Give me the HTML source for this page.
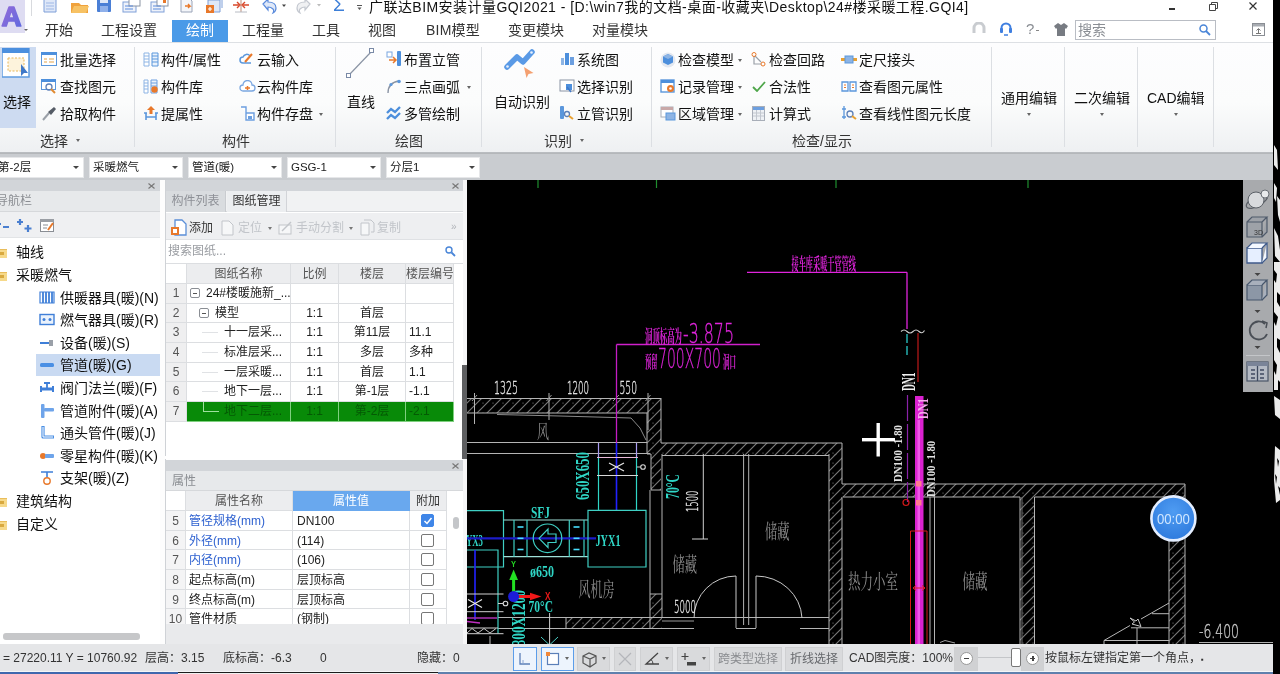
<!DOCTYPE html>
<html lang="zh-CN">
<head>
<meta charset="utf-8">
<title>广联达BIM安装计量GQI2021</title>
<style>
*{box-sizing:border-box;margin:0;padding:0}
html,body{width:1280px;height:674px;overflow:hidden;background:#fff}
body{position:relative;font-family:"Liberation Sans","Noto Sans CJK SC",sans-serif;font-size:14px;color:#222;filter:blur(.55px)}
.a{position:absolute;white-space:nowrap}
.t{position:absolute;white-space:nowrap;line-height:20px;height:20px}
#title{left:369px;top:-3px;font-size:14px;letter-spacing:.45px;color:#111;line-height:20px}
#tabs{left:0;top:17px;width:1273px;height:25px;background:#fff}
.tab{position:absolute;top:3px;height:22px;line-height:21px;font-size:14px;color:#333}
.tab.on{background:#4a9ae8;color:#fff;text-align:center;top:3px;height:23px}
#ribbon{left:0;top:42px;width:1273px;height:111px;background:linear-gradient(#fdfdfe 0,#fbfcfc 55%,#eef0f2 100%);border-top:1px solid #dde0e4;border-bottom:1px solid #b9bcc0}
.rb{position:absolute;font-size:14px;line-height:20px;color:#111}
.gl{position:absolute;top:88px;font-size:14px;line-height:20px;color:#333}
.vsep{position:absolute;top:4px;width:1px;height:100px;background:#dcdfe3}
#combo{left:0;top:153px;width:1273px;height:27px;background:#c9ccd0;border-top:1px solid #b4b7ba}
.cb{position:absolute;top:2.500px;height:21px;background:#fff;border:1px solid #e6e7e9;font-size:11.500px;line-height:18px;padding-left:3px;color:#222}
.cb i{position:absolute;right:4px;top:8px;border:3px solid transparent;border-top:3px solid #444;border-bottom:0}
.dn{position:absolute;width:0;height:0;border:2.500px solid transparent;border-top:3px solid #666;border-bottom:0;margin-left:.5px}

#left{left:0;top:180px;width:160px;height:464px;background:#fff;overflow:hidden}
#gap1{left:160px;top:180px;width:5px;height:464px;background:#fdfdfd}
.phead{position:absolute;left:0;top:0;width:100%;height:11px;background:#d2d5d9}
.ptitle{position:absolute;left:0;top:11px;width:100%;height:21px;background:#e7e9eb;border-bottom:1px solid #d6d8db;font-size:12px;line-height:20px;color:#8a8d92}
.nv{position:absolute;font-size:14px;line-height:22px;height:22px;color:#111;white-space:nowrap}
#mid{left:165px;top:180px;width:298px;height:276px;background:#fff;overflow:hidden;border-left:1px solid #cfd2d6}
#prop{left:165px;top:459px;width:298px;height:185px;background:#fff;overflow:hidden;border-left:1px solid #cfd2d6}
.tb12{position:absolute;font-size:12px;line-height:20px;height:20px;white-space:nowrap}
.cell{position:absolute;font-size:12px;line-height:19px;height:20px;white-space:nowrap;color:#222;border-right:1px solid #dcdee1;border-bottom:1px solid #dcdee1;overflow:hidden}
.hd{background:#ecedef;color:#555;text-align:center;line-height:20px}
.rn{background:#efeff0;color:#555;text-align:center}
.c{text-align:center}
#status{left:0;top:643.500px;width:1273px;height:27.500px;background:#e5e6e8;font-size:12px;color:#333}
#status .s{position:absolute;top:4.500px;line-height:20px;white-space:nowrap}
.sb{position:absolute;top:3px;height:24px;background:#d9dadc;border:1px solid #cfd0d2}
.sb.on{background:#edf4fd;border:1.500px solid #5b9dea}
.pm{position:absolute;top:4px;width:10px;height:10px;border:1px solid #8a8e94;border-radius:2px;background:#fff}
.pm:after{content:"";position:absolute;left:2px;top:3.500px;width:4px;height:1px;background:#555}
.tl{position:absolute;top:9px;height:1px;background:#e0e2e5}
.tl2{position:absolute;left:16px;top:0;width:16px;height:10px;border-left:1px solid #9fe09f;border-bottom:1px solid #9fe09f}
.ck{position:absolute;left:11px;top:3px;width:13px;height:13px;border:1px solid #777;border-radius:2px;background:#fff}
#cad{left:467px;top:179.500px;width:806px;height:464px;background:#000;overflow:hidden}
#vtb{left:1243px;top:180px;width:30px;height:212px;background:#a8aaad}
#prop .cell{line-height:21px}
</style>
</head>
<body>
<!-- logo + quick access -->
<div class="a" style="left:0;top:0;width:25px;height:33px;background:#dedcf2;z-index:5"></div>
<svg class="a" style="left:0;top:3px;z-index:6" width="24" height="27" viewBox="0 0 24 27"><defs><linearGradient id="lg" x1="0" y1="0" x2="1" y2="1"><stop offset="0" stop-color="#9a6ad8"/><stop offset="1" stop-color="#5a6ae0"/></linearGradient></defs><text x="11.500" y="23" text-anchor="middle" font-family="Liberation Sans" font-weight="bold" font-size="27" fill="url(#lg)" stroke="url(#lg)" stroke-width="1.600" stroke-linejoin="round" textLength="20" lengthAdjust="spacingAndGlyphs">A</text></svg>
<i class="dn" style="left:23px;top:29px;border-width:2px;border-top-color:#666;z-index:6"></i>
<div class="a" style="left:31px;top:0;width:1px;height:16px;background:#d8dade"></div>
<svg class="a" style="left:42px;top:-3px" width="320" height="18" viewBox="0 0 320 18">
 <path d="M2 0h9l3 3v12H2z" fill="#dfe8f8" stroke="#7f9fd8"/><path d="M4 6h8M4 9h8M4 12h8" stroke="#9db7e6"/>
 <path d="M29 6h8l2 2h7v8H29z" fill="#f0a23c"/><path d="M32 9h15l-3 7H29z" fill="#f7c264"/>
 <rect x="55" y="1" width="14" height="14" rx="1" fill="#4a7fd6"/><rect x="58" y="1" width="8" height="5" fill="#dfe8f8"/><rect x="58" y="9" width="8" height="6" fill="#8fb0ea"/>
 <rect x="81" y="5" width="13" height="10" fill="#eef2fa" stroke="#7f9fd8"/><rect x="87" y="1" width="11" height="8" fill="#fff" stroke="#8a94a4"/><path d="M83 9h8M83 12h8" stroke="#5b8bdc"/>
 <rect x="109" y="5" width="13" height="10" fill="#eef2fa" stroke="#7f9fd8"/><rect x="115" y="1" width="11" height="8" fill="#fff" stroke="#8a94a4"/><path d="M111 9h8M111 12h8" stroke="#5b8bdc"/><rect x="121" y="3" width="3" height="3" fill="#e8782a"/>
 <path d="M139 1h8l3 3v11h-11z" fill="#f4f6fa" stroke="#9aa4b8"/><path d="M143 9h5l-2-2m2 2l-2 2" stroke="#e8782a" stroke-width="1.400" fill="none"/>
 <path d="M166 3h12v12h-12z" fill="#dfe8f8" stroke="#7f9fd8"/><path d="M170 0h10v11" fill="none" stroke="#7f9fd8"/><rect x="164" y="8" width="8" height="8" fill="#e8782a"/><path d="M166 12h4M168 10v4" stroke="#fff" stroke-width="1.200"/>
 <path d="M199 1v14" stroke="#c8a090" stroke-width="1.200"/><path d="M191 8h6M207 8h-6" stroke="#d8482a" stroke-width="1.600"/><path d="M195 5l3 3-3 3M203 5l-3 3 3 3" fill="none" stroke="#d8482a" stroke-width="1.400"/><path d="M193 15h12" stroke="#b8bcc4"/>
 <path d="M221 7l5-5v3c5 0 8 2 8 6 0 2-1 4-3 5 1-2 1-3 0-4-1-1-3-2-5-2v3z" fill="#dfe8f8" stroke="#5b8bdc" stroke-width="1.200"/>
 <path d="M240 7.500l2 2.500 2-2.500z" fill="#444"/>
 <path d="M268 7l-5-5v3c-5 0-8 2-8 6 0 2 1 4 3 5-1-2-1-3 0-4 1-1 3-2 5-2v3z" fill="#f0f1f3" stroke="#c4c8d0" stroke-width="1.200"/>
 <path d="M275 7l2 2.500 2-2.500z" fill="#bbb"/>
 <path d="M315.500 10.500l2 2.500 2-2.500z" fill="#555"/>
</svg>
<span class="a" style="left:333px;top:-5px;font-size:19px;line-height:20px;color:#3d7fd8;font-family:'Liberation Sans',sans-serif">Σ</span>
<div class="a" style="left:357px;top:4.500px;width:5px;height:1px;background:#555"></div>
<!-- window controls -->
<div class="a" style="left:1169px;top:8px;width:6px;height:2px;background:#333"></div>
<svg class="a" style="left:1209px;top:1px" width="10" height="10" viewBox="0 0 10 10"><path d="M.5 3.500h6v6h-6z" fill="#fff" stroke="#444"/><path d="M2.500 3.500v-2h6v6h-2" fill="none" stroke="#444"/></svg>
<svg class="a" style="left:1249px;top:2px" width="8" height="8" viewBox="0 0 8 8"><path d="M.5.5l7 7M7.500.5l-7 7" stroke="#333" stroke-width="1.200"/></svg>
<!-- title bar -->
<div class="a" id="title">广联达BIM安装计量GQI2021 - [D:\win7我的文档-桌面-收藏夹\Desktop\24#楼采暖工程.GQI4]</div>
<div class="a" id="tabs">
 <span class="tab" style="left:45px">开始</span>
 <span class="tab" style="left:101px">工程设置</span>
 <span class="tab on" style="left:172px;width:56px">绘制</span>
 <span class="tab" style="left:242px">工程量</span>
 <span class="tab" style="left:312px">工具</span>
 <span class="tab" style="left:368px">视图</span>
 <span class="tab" style="left:426px;letter-spacing:.2px">BIM模型</span>
 <span class="tab" style="left:508px">变更模块</span>
 <span class="tab" style="left:592px">对量模块</span>

 <svg class="a" style="left:972px;top:5px" width="14" height="14" viewBox="0 0 14 14"><path d="M2 11V6a5 5 0 0 1 10 0v5" fill="none" stroke="#c9ccd0" stroke-width="3"/></svg>
 <svg class="a" style="left:999px;top:4px" width="14" height="16" viewBox="0 0 14 16"><path d="M2.500 9V7a4.500 4.500 0 0 1 9 0v2" fill="none" stroke="#3f7fe0" stroke-width="2"/><rect x="1" y="7" width="3" height="5" rx="1" fill="#3f7fe0"/><rect x="10" y="7" width="3" height="5" rx="1" fill="#3f7fe0"/><path d="M5 14h4" stroke="#3f7fe0" stroke-width="1.500"/></svg>
 <span class="a" style="left:1026px;top:1px;font-size:15px;line-height:22px;color:#8a8e94">?</span>
 <div class="a" style="left:1036px;top:13px;width:3px;height:1px;background:#888"></div>
 <svg class="a" style="left:1054px;top:6px" width="14" height="13" viewBox="0 0 14 13"><path d="M4 0l3 2 3-2 4 3-2 3-1-1v8H3V5L2 6 0 3z" fill="#777b82"/></svg>
 <div class="a" style="left:1075px;top:3px;width:141px;height:20px;border:1px solid #b9bdc4;background:#fff"></div>
 <span class="a" style="left:1078px;top:3px;font-size:14px;line-height:20px;color:#8a8e94">搜索</span>
 <svg class="a" style="left:1199px;top:7px" width="12" height="12" viewBox="0 0 12 12"><circle cx="4.500" cy="4.500" r="3.500" fill="none" stroke="#4a86d8" stroke-width="1.500"/><path d="M7 7l4 4" stroke="#4a86d8" stroke-width="1.800"/></svg>
 <svg class="a" style="left:1252px;top:6px" width="13" height="13" viewBox="0 0 13 13"><rect x=".5" y=".5" width="12" height="12" fill="#fff" stroke="#8a8e94"/><rect x="1" y="1" width="11" height="2.500" fill="#a8acb2"/><path d="M6.500 10V6M4.500 7.500l2-2 2 2M4 10.500h5" stroke="#777" fill="none"/></svg>
</div>
<div class="a" id="ribbon">
 <div class="a" style="left:0;top:4px;width:36px;height:81px;background:#cddbf1"></div>
 <svg class="a" style="left:2px;top:5px" width="28" height="30" viewBox="0 0 28 30"><rect x="0" y="0" width="27" height="29" fill="#fff" stroke="#5d9be0" stroke-width="1.5"/><rect x="0" y="0" width="27" height="5" fill="#4b8fde"/><rect x="6" y="10" width="16" height="13" fill="#fdf3dc" stroke="#e8b75a" stroke-dasharray="2 1.5" stroke-width="1"/><path d="M19 16l7 9-4 0-3 3z" fill="#3f78c8"/></svg>
 <span class="rb" style="left:3px;top:49px">选择</span>
 <!-- 选择 group -->
 <svg class="a" style="left:41px;top:9px" width="16" height="14" viewBox="0 0 16 14"><rect x=".5" y=".5" width="15" height="13" fill="#fff" stroke="#5b97dc"/><rect x="0" y="0" width="16" height="3" fill="#4d8fdc"/><path d="M3 7h3M8 7h5M3 10h3M8 10h5" stroke="#e4a44a" stroke-width="1.2"/></svg>
 <span class="rb" style="left:60px;top:7px">批量选择</span>
 <svg class="a" style="left:41px;top:36px" width="16" height="15" viewBox="0 0 16 15"><rect x=".5" y=".5" width="14" height="10" fill="#fff" stroke="#5b97dc"/><rect x="0" y="0" width="15" height="3" fill="#4d8fdc"/><circle cx="8" cy="8" r="3" fill="none" stroke="#5b7fb8" stroke-width="1.3"/><path d="M10 10l4 4" stroke="#e08a30" stroke-width="2"/></svg>
 <span class="rb" style="left:60px;top:34px">查找图元</span>
 <svg class="a" style="left:42px;top:63px" width="15" height="15" viewBox="0 0 15 15"><path d="M1 14l6-7" stroke="#9aa0a8" stroke-width="2"/><path d="M6 6l3 3 5-6-2-2z" fill="#555c66"/></svg>
 <span class="rb" style="left:60px;top:61px">拾取构件</span>
 <span class="gl" style="left:40px">选择</span><i class="dn" style="left:75px;top:96px"></i>
 <div class="vsep" style="left:134px"></div>
 <!-- 构件 group -->
 <svg class="a" style="left:143px;top:9px" width="16" height="15" viewBox="0 0 16 15"><path d="M1 1h5v13H1zM1 4h5M1 7h5M1 10h5" fill="#fff" stroke="#8db4e4" stroke-width="1"/><path d="M9 1h6v13H9zM9 4h6M9 7h6M9 10h6" fill="#eaf2fc" stroke="#5b97dc" stroke-width="1"/></svg>
 <span class="rb" style="left:161px;top:7px">构件/属性</span>
 <svg class="a" style="left:143px;top:36px" width="16" height="15" viewBox="0 0 16 15"><path d="M1 1h4v13H1zM1 4h4M1 7h4M1 10h4" fill="#fff" stroke="#8db4e4"/><path d="M8 1h6v13H8zM8 4h6M8 7h6" fill="#eaf2fc" stroke="#6c9fe0"/><circle cx="11.5" cy="10.5" r="3.2" fill="#e8782a"/></svg>
 <span class="rb" style="left:161px;top:34px">构件库</span>
 <svg class="a" style="left:143px;top:62px" width="16" height="16" viewBox="0 0 16 16"><path d="M8 1l4 4H9.500v4h-3V5H4z" fill="#e8782a"/><path d="M1 8h3M12 8h3M3 8v7M13 8v7M3 12h10" stroke="#5b97dc" stroke-width="1.6" fill="none"/></svg>
 <span class="rb" style="left:161px;top:61px">提属性</span>
 <svg class="a" style="left:239px;top:10px" width="16" height="13" viewBox="0 0 16 13"><path d="M12 10H4a3 3 0 0 1 0-6 4 4 0 0 1 7-1" fill="none" stroke="#5b97dc" stroke-width="1.5"/><path d="M6 9l7-8" stroke="#e8782a" stroke-width="2"/></svg>
 <span class="rb" style="left:257px;top:7px">云输入</span>
 <svg class="a" style="left:239px;top:37px" width="17" height="13" viewBox="0 0 17 13"><path d="M13 11H4a3 3 0 0 1 0-6 4.500 4.500 0 0 1 9 0 3 3 0 0 1 0 6z" fill="#fff" stroke="#7aa6e0" stroke-width="1.3"/><path d="M6 8h5M8.500 6v4" stroke="#e8782a" stroke-width="1.5"/></svg>
 <span class="rb" style="left:257px;top:34px">云构件库</span>
 <svg class="a" style="left:240px;top:63px" width="15" height="15" viewBox="0 0 15 15"><path d="M1 1h5v13h8V7H6" fill="#fff" stroke="#6c9fe0" stroke-width="1.4"/><rect x="8" y="10" width="4" height="3" fill="#6c9fe0"/></svg>
 <span class="rb" style="left:257px;top:61px">构件存盘</span><i class="dn" style="left:318px;top:70px"></i>
 <span class="gl" style="left:222px">构件</span>
 <div class="vsep" style="left:335px"></div>
 <!-- 绘图 group -->
 <svg class="a" style="left:345px;top:4px" width="30" height="32" viewBox="0 0 30 32"><path d="M4 28L26 5" stroke="#8a94a4" stroke-width="1.2"/><rect x="1.500" y="26.500" width="4" height="4" fill="#fff" stroke="#7a8aa6"/><rect x="24.500" y="1.500" width="4" height="4" fill="#fff" stroke="#7a8aa6"/></svg>
 <span class="rb" style="left:347px;top:49px">直线</span>
 <svg class="a" style="left:386px;top:8px" width="16" height="16" viewBox="0 0 16 16"><rect x="1" y="1" width="5" height="5" fill="#fff" stroke="#7aa6e0"/><rect x="11" y="0" width="4" height="15" rx="1" fill="#4d8fdc"/><path d="M3 9h6M7 6l3 3-3 3" stroke="#e8782a" stroke-width="1.5" fill="none"/></svg>
 <span class="rb" style="left:404px;top:7px">布置立管</span>
 <svg class="a" style="left:386px;top:36px" width="16" height="15" viewBox="0 0 16 15"><path d="M2 14C2 6 6 3 13 2" fill="none" stroke="#8a94a4" stroke-width="1.4"/><circle cx="13" cy="2.500" r="1.800" fill="#5b97dc"/><circle cx="5" cy="5.500" r="1.600" fill="#5b97dc"/></svg>
 <span class="rb" style="left:404px;top:34px">三点画弧</span><i class="dn" style="left:466px;top:43px"></i>
 <svg class="a" style="left:386px;top:63px" width="16" height="15" viewBox="0 0 16 15"><path d="M1 7l4-4 4 3 5-5M1 13l4-4 4 3 5-5" fill="none" stroke="#4d8fdc" stroke-width="2.400"/></svg>
 <span class="rb" style="left:404px;top:61px">多管绘制</span>
 <span class="gl" style="left:395px">绘图</span>
 <div class="vsep" style="left:481px"></div>
 <!-- 识别 group -->
 <svg class="a" style="left:504px;top:5px" width="32" height="32" viewBox="0 0 32 32"><path d="M3 19l10-10 6 5 9-10" fill="none" stroke="#5a9ae6" stroke-width="5.500" stroke-linecap="round" stroke-linejoin="round"/><circle cx="3.500" cy="18.500" r="1.300" fill="#e8f0fc"/><circle cx="27.500" cy="4.500" r="1.300" fill="#e8f0fc"/><path d="M20 19l2.500 11 2-4 5-1z" fill="#f4a070"/></svg>
 <span class="rb" style="left:494px;top:49px">自动识别</span>
 <svg class="a" style="left:560px;top:9px" width="15" height="14" viewBox="0 0 15 14"><rect x="1" y="6" width="3" height="7" fill="#8db4e4"/><rect x="5" y="1" width="4" height="12" fill="#4d8fdc"/><rect x="10" y="5" width="4" height="8" fill="#6c9fe0"/></svg>
 <span class="rb" style="left:577px;top:7px">系统图</span>
 <svg class="a" style="left:559px;top:36px" width="16" height="15" viewBox="0 0 16 15"><rect x="1" y="1" width="14" height="11" fill="#fff" stroke="#8a94a4"/><path d="M7 5h6v6H7z" fill="#4d8fdc"/><path d="M8 8l4 5" stroke="#3f78c8" stroke-width="1.5"/></svg>
 <span class="rb" style="left:577px;top:34px">选择识别</span>
 <svg class="a" style="left:559px;top:62px" width="16" height="16" viewBox="0 0 16 16"><rect x="1" y="1" width="4" height="13" rx="1" fill="#5b97dc"/><circle cx="8" cy="9" r="2.500" fill="none" stroke="#5b7fb8" stroke-width="1.3"/><path d="M10 11l4 3" stroke="#e8a030" stroke-width="2"/></svg>
 <span class="rb" style="left:577px;top:61px">立管识别</span>
 <span class="gl" style="left:544px">识别</span><i class="dn" style="left:579px;top:96px"></i>
 <div class="vsep" style="left:651px"></div>
 <!-- 检查/显示 group -->
 <svg class="a" style="left:660px;top:9px" width="16" height="16" viewBox="0 0 16 16"><circle cx="8" cy="8" r="7.500" fill="#e3e8f0"/><path d="M8 2l5 2.500v6L8 13l-5-2.500v-6z" fill="#4d8fdc"/><path d="M8 2l5 2.500L8 7 3 4.500z" fill="#8db4e4"/></svg>
 <span class="rb" style="left:678px;top:7px">检查模型</span><i class="dn" style="left:737px;top:16px"></i>
 <svg class="a" style="left:660px;top:36px" width="16" height="15" viewBox="0 0 16 15"><rect x="1" y="1" width="13" height="12" fill="#fff" stroke="#5b97dc" stroke-width="1.4"/><rect x="1" y="1" width="13" height="3" fill="#4d8fdc"/><circle cx="10.500" cy="9.500" r="3.500" fill="#e8782a"/><circle cx="10.500" cy="9.500" r="1.300" fill="#fff"/></svg>
 <span class="rb" style="left:678px;top:34px">记录管理</span><i class="dn" style="left:737px;top:43px"></i>
 <svg class="a" style="left:660px;top:63px" width="16" height="15" viewBox="0 0 16 15"><rect x="1" y="1" width="12" height="10" fill="#fff" stroke="#a8aeb8"/><rect x="1" y="1" width="12" height="3" fill="#c8a8a8"/><rect x="6" y="7" width="9" height="7" fill="#8db4e4" stroke="#5b97dc"/></svg>
 <span class="rb" style="left:678px;top:61px">区域管理</span><i class="dn" style="left:737px;top:70px"></i>
 <svg class="a" style="left:751px;top:9px" width="15" height="15" viewBox="0 0 15 15"><path d="M3 2v10h9M3 3l7 7" fill="none" stroke="#9aa0a8" stroke-width="1.2"/><circle cx="3" cy="2.500" r="2" fill="#fff" stroke="#e8782a"/><circle cx="12" cy="12" r="2" fill="#fff" stroke="#e8782a"/></svg>
 <span class="rb" style="left:769px;top:7px">检查回路</span>
 <svg class="a" style="left:752px;top:38px" width="14" height="11" viewBox="0 0 14 11"><path d="M1 6l4 4 8-9" fill="none" stroke="#4ea64a" stroke-width="1.800"/></svg>
 <span class="rb" style="left:769px;top:34px">合法性</span>
 <svg class="a" style="left:752px;top:63px" width="14" height="15" viewBox="0 0 14 15"><rect x=".5" y=".5" width="12" height="14" fill="#eef1f5" stroke="#a8aeb8"/><rect x="1" y="1" width="11" height="3" fill="#6c9fe0"/><path d="M1 7h11M1 10h11M4.500 4v10M8.500 4v10" stroke="#c2c7cf"/></svg>
 <span class="rb" style="left:769px;top:61px">计算式</span>
 <svg class="a" style="left:841px;top:12px" width="16" height="9" viewBox="0 0 16 9"><path d="M0 4.500h16" stroke="#e8a030" stroke-width="3"/><rect x="4" y="1" width="8" height="7" fill="#8db4e4" stroke="#5b97dc"/></svg>
 <span class="rb" style="left:859px;top:7px">定尺接头</span>
 <svg class="a" style="left:841px;top:38px" width="16" height="12" viewBox="0 0 16 12"><path d="M1 1h6v9H1zM9 1h6v9H9z" fill="#fff" stroke="#5b97dc" stroke-width="1.300"/><path d="M3 4h2M11 4h2M3 6.500h2M11 6.500h2" stroke="#e8782a"/></svg>
 <span class="rb" style="left:859px;top:34px">查看图元属性</span>
 <svg class="a" style="left:841px;top:62px" width="16" height="16" viewBox="0 0 16 16"><path d="M3 1v13M1 4h4M1 12h4" stroke="#5b97dc" stroke-width="1.300"/><circle cx="9" cy="9" r="3" fill="none" stroke="#5b7fb8" stroke-width="1.300"/><path d="M11 11l4 3" stroke="#e8a030" stroke-width="2"/></svg>
 <span class="rb" style="left:859px;top:61px">查看线性图元长度</span>
 <span class="gl" style="left:792px">检查/显示</span>
 <div class="vsep" style="left:991px"></div>
 <span class="rb" style="left:1001px;top:45px">通用编辑</span><i class="dn" style="left:1026px;top:70px"></i>
 <div class="vsep" style="left:1064px"></div>
 <span class="rb" style="left:1074px;top:45px">二次编辑</span><i class="dn" style="left:1099px;top:70px"></i>
 <div class="vsep" style="left:1137px"></div>
 <span class="rb" style="left:1147px;top:45px">CAD编辑</span><i class="dn" style="left:1173px;top:70px"></i>
 <div class="vsep" style="left:1213px"></div>
</div>
<div class="a" id="combo">
 <div class="cb" style="left:-6px;width:90px">第-2层<i></i></div>
 <div class="cb" style="left:89px;width:94px">采暖燃气<i></i></div>
 <div class="cb" style="left:188px;width:94px">管道(暖)<i></i></div>
 <div class="cb" style="left:287px;width:94px">GSG-1<i></i></div>
 <div class="cb" style="left:386px;width:94px">分层1<i></i></div>
</div>
<div class="a" id="left">
 <div class="phead"></div>
 <svg class="a" style="left:148px;top:3px" width="7" height="6" viewBox="0 0 7 6"><path d="M.5.5l6 5M6.500.5l-6 5" stroke="#777" stroke-width="1.100"/></svg>
 <div class="ptitle"><span style="position:absolute;left:-4px">导航栏</span></div>
 <div class="a" style="left:0;top:32px;width:160px;height:26px;background:#eff0f2;border-bottom:1px solid #e2e4e6"></div>
 <svg class="a" style="left:-2px;top:37px" width="60" height="18" viewBox="0 0 60 18"><path d="M0 7h3M5 10h6" stroke="#4a7fd0" stroke-width="2"/><path d="M22 2v6M19 5h6" stroke="#4a7fd0" stroke-width="2.200"/><path d="M30 8v7M26.500 11.500h7" stroke="#4a7fd0" stroke-width="2.200"/><rect x="42.500" y="2.500" width="13" height="12" fill="#fff" stroke="#8a8e94"/><rect x="42" y="2" width="14" height="3" fill="#9a9ea4"/><path d="M45 8h5M45 11h4" stroke="#8a8e94"/><path d="M50 13l5-7" stroke="#e8782a" stroke-width="2"/></svg>
 <svg class="a" style="left:-6px;top:66px" width="13" height="12" viewBox="0 0 13 12"><path d="M0 1h5l1 2h7v9H0z" fill="#e9bd5b"/><rect x="0" y="4" width="13" height="8" fill="#f6d98a"/><rect x="3" y="6" width="7" height="3" fill="#d9a93f"/></svg>
 <span class="nv" style="left:16px;top:61px">轴线</span>
 <svg class="a" style="left:-6px;top:89px" width="13" height="12" viewBox="0 0 13 12"><path d="M0 1h5l1 2h7v9H0z" fill="#e9bd5b"/><rect x="0" y="4" width="13" height="8" fill="#f6d98a"/><rect x="3" y="6" width="7" height="3" fill="#d9a93f"/></svg>
 <span class="nv" style="left:16px;top:84px">采暖燃气</span>
 <svg class="a" style="left:39px;top:110px" width="16" height="16" viewBox="0 0 16 16"><path d="M1 2h14v11H1z" fill="#fff" stroke="#3f7fd8" stroke-width="1.200"/><path d="M4 2v11M7 2v11M10 2v11M13 2v11" stroke="#3f7fd8" stroke-width="1.800"/></svg>
 <span class="nv" style="left:60px;top:107px">供暖器具(暖)(N)</span>
 <svg class="a" style="left:39px;top:132px" width="16" height="16" viewBox="0 0 16 16"><rect x="1" y="2.500" width="14" height="10" fill="#eaf2fc" stroke="#3f7fd8" stroke-width="1.400"/><circle cx="5" cy="7.500" r="1.500" fill="#3f7fd8"/><circle cx="11" cy="7.500" r="1.500" fill="#3f7fd8"/></svg>
 <span class="nv" style="left:60px;top:129px">燃气器具(暖)(R)</span>
 <svg class="a" style="left:39px;top:155px" width="16" height="16" viewBox="0 0 16 16"><path d="M1 8h9" stroke="#3f7fd8" stroke-width="2"/><rect x="10" y="5" width="4" height="6" fill="#9aa0a8"/></svg>
 <span class="nv" style="left:60px;top:152px">设备(暖)(S)</span>
 <div class="a" style="left:36px;top:174px;width:124px;height:22px;background:#c9daf2"></div>
 <svg class="a" style="left:39px;top:177px" width="16" height="16" viewBox="0 0 16 16"><rect x="1" y="6" width="14" height="4" rx="1.500" fill="#4a8fe4"/></svg>
 <span class="nv" style="left:60px;top:174px">管道(暖)(G)</span>
 <svg class="a" style="left:39px;top:200px" width="16" height="16" viewBox="0 0 16 16"><path d="M1 9h14" stroke="#3f7fd8" stroke-width="3"/><path d="M8 9V3M5 3h6" stroke="#3f7fd8" stroke-width="1.800"/><rect x="1" y="6" width="2" height="6" fill="#3f7fd8"/><rect x="13" y="6" width="2" height="6" fill="#3f7fd8"/></svg>
 <span class="nv" style="left:60px;top:197px">阀门法兰(暖)(F)</span>
 <svg class="a" style="left:39px;top:223px" width="16" height="16" viewBox="0 0 16 16"><rect x="2" y="1" width="3.500" height="14" rx="1" fill="#6ea4ea"/><rect x="5" y="5" width="10" height="3.500" rx="1" fill="#6ea4ea"/></svg>
 <span class="nv" style="left:60px;top:220px">管道附件(暖)(A)</span>
 <svg class="a" style="left:39px;top:245px" width="16" height="16" viewBox="0 0 16 16"><path d="M4 1v11h11" fill="none" stroke="#4a8fe4" stroke-width="3.200" stroke-linejoin="round"/><path d="M4 2v10h10" fill="none" stroke="#fff" stroke-width="1"/></svg>
 <span class="nv" style="left:60px;top:242px">通头管件(暖)(J)</span>
 <svg class="a" style="left:39px;top:268px" width="16" height="16" viewBox="0 0 16 16"><circle cx="4" cy="8" r="3" fill="#e8782a"/><rect x="6" y="6" width="9" height="4" rx="1" fill="#6ea4ea"/></svg>
 <span class="nv" style="left:60px;top:265px">零星构件(暖)(K)</span>
 <svg class="a" style="left:39px;top:290px" width="16" height="16" viewBox="0 0 16 16"><path d="M2 2h12M8 2v5" stroke="#3f7fd8" stroke-width="1.600"/><circle cx="8" cy="11" r="3.200" fill="none" stroke="#e8782a" stroke-width="1.400"/></svg>
 <span class="nv" style="left:60px;top:287px">支架(暖)(Z)</span>
 <svg class="a" style="left:-6px;top:315px" width="13" height="12" viewBox="0 0 13 12"><path d="M0 1h5l1 2h7v9H0z" fill="#e9bd5b"/><rect x="0" y="4" width="13" height="8" fill="#f6d98a"/><rect x="3" y="6" width="7" height="3" fill="#d9a93f"/></svg>
 <span class="nv" style="left:16px;top:310px">建筑结构</span>
 <svg class="a" style="left:-6px;top:338px" width="13" height="12" viewBox="0 0 13 12"><path d="M0 1h5l1 2h7v9H0z" fill="#e9bd5b"/><rect x="0" y="4" width="13" height="8" fill="#f6d98a"/><rect x="3" y="6" width="7" height="3" fill="#d9a93f"/></svg>
 <span class="nv" style="left:16px;top:333px">自定义</span>
 <div class="a" style="left:3px;top:453px;width:137px;height:7px;border-radius:3px;background:#c6c7c9"></div>
</div>
<div class="a" id="gap1"></div>
<div class="a" id="mid">
 <div class="phead"></div>
 <svg class="a" style="left:286px;top:3px" width="7" height="6" viewBox="0 0 7 6"><path d="M.5.5l6 5M6.500.5l-6 5" stroke="#777" stroke-width="1.100"/></svg>
 <div class="a" style="left:0;top:11px;width:298px;height:21px;background:#f1f2f3;border-bottom:1px solid #d9dbde"></div>
 <div class="a" style="left:0;top:11px;width:60px;height:21px;background:#d9dcdf;font-size:12px;line-height:20px;color:#8d9096;text-align:center;border-right:1px solid #c9ccd0">构件列表</div>
 <div class="a" style="left:61px;top:11px;width:60px;height:21px;background:#eceef0;font-size:12px;line-height:20px;color:#333;text-align:center;border-right:1px solid #d2d4d8">图纸管理</div>
 <div class="a" style="left:0;top:33px;width:298px;height:27px;background:#eeeff1;border-bottom:1px solid #dfe1e4"></div>
 <svg class="a" style="left:5px;top:38.500px" width="16" height="18" viewBox="0 0 16 18"><path d="M4 1h7l4 4v11H4z" fill="#fff" stroke="#5b8fd8" stroke-width="1.300"/><rect x="0" y="8" width="8" height="8" fill="#e8782a"/><rect x="2" y="10" width="4" height="4" fill="#fff"/></svg>
 <span class="tb12" style="left:23px;top:37.500px;color:#333">添加</span>
 <svg class="a" style="left:55px;top:39.500px" width="13" height="16" viewBox="0 0 13 16"><path d="M1 1h7l4 4v10H1z" fill="#f6f7f8" stroke="#c2c5ca"/></svg>
 <span class="tb12" style="left:72px;top:37.500px;color:#c2c5ca">定位</span><i class="dn" style="left:101px;top:46.500px;border-top-color:#777"></i>
 <svg class="a" style="left:112px;top:39.500px" width="16" height="16" viewBox="0 0 16 16"><rect x="1" y="5" width="12" height="9" fill="#f6f7f8" stroke="#c2c5ca"/><path d="M4 11l9-9" stroke="#c2c5ca" stroke-width="1.500"/></svg>
 <span class="tb12" style="left:130px;top:37.500px;color:#c2c5ca">手动分割</span><i class="dn" style="left:182px;top:46.500px;border-top-color:#777"></i>
 <svg class="a" style="left:194px;top:38.500px" width="15" height="17" viewBox="0 0 15 17"><path d="M1 4h8v12H1z" fill="#f6f7f8" stroke="#c2c5ca"/><path d="M4 1h7l3 3v9h-3" fill="none" stroke="#c2c5ca"/></svg>
 <span class="tb12" style="left:211px;top:37.500px;color:#c2c5ca">复制</span>
 <span class="tb12" style="left:285px;top:36.500px;color:#b0b3b8;font-size:10px">»</span>
 <span class="tb12" style="left:2px;top:60.500px;color:#9a9da2">搜索图纸...</span>
 <svg class="a" style="left:279px;top:65.500px" width="11" height="11" viewBox="0 0 11 11"><circle cx="4" cy="4" r="3" fill="none" stroke="#4a86d8" stroke-width="1.400"/><path d="M6.500 6.500l3.500 3.500" stroke="#4a86d8" stroke-width="1.800"/></svg>
 <div class="a" style="left:0;top:83px;width:298px;height:1px;background:#dcdee1"></div>
 <div class="cell" style="left:0px;top:84px;width:21px"></div>
 <div class="cell hd" style="left:21px;top:84px;width:104px">图纸名称</div>
 <div class="cell hd" style="left:125px;top:84px;width:48px">比例</div>
 <div class="cell hd" style="left:173px;top:84px;width:67px">楼层</div>
 <div class="cell hd" style="left:240px;top:84px;width:48px">楼层编号</div>
 <div class="cell rn" style="left:0px;top:104px;width:21px;height:20px">1</div>
 <div class="cell" style="left:21px;top:104px;width:104px;height:20px"><b class="pm" style="left:3px"></b><span style="position:absolute;left:19px">24#楼暖施新_...</span></div>
 <div class="cell c" style="left:125px;top:104px;width:48px;height:20px"></div>
 <div class="cell c" style="left:173px;top:104px;width:67px;height:20px"></div>
 <div class="cell" style="left:240px;top:104px;width:48px;height:20px;padding-left:3px"></div>
 <div class="cell rn" style="left:0px;top:124px;width:21px;height:19px">2</div>
 <div class="cell" style="left:21px;top:124px;width:104px;height:19px"><b class="pm" style="left:12px"></b><span style="position:absolute;left:28px">模型</span></div>
 <div class="cell c" style="left:125px;top:124px;width:48px;height:19px">1:1</div>
 <div class="cell c" style="left:173px;top:124px;width:67px;height:19px">首层</div>
 <div class="cell" style="left:240px;top:124px;width:48px;height:19px;padding-left:3px"></div>
 <div class="cell rn" style="left:0px;top:143px;width:21px;height:20px">3</div>
 <div class="cell" style="left:21px;top:143px;width:104px;height:20px"><i class="tl" style="left:15px;width:16px"></i><span style="position:absolute;left:37px">十一层采...</span></div>
 <div class="cell c" style="left:125px;top:143px;width:48px;height:20px">1:1</div>
 <div class="cell c" style="left:173px;top:143px;width:67px;height:20px">第11层</div>
 <div class="cell" style="left:240px;top:143px;width:48px;height:20px;padding-left:3px">11.1</div>
 <div class="cell rn" style="left:0px;top:163px;width:21px;height:20px">4</div>
 <div class="cell" style="left:21px;top:163px;width:104px;height:20px"><i class="tl" style="left:15px;width:16px"></i><span style="position:absolute;left:37px">标准层采...</span></div>
 <div class="cell c" style="left:125px;top:163px;width:48px;height:20px">1:1</div>
 <div class="cell c" style="left:173px;top:163px;width:67px;height:20px">多层</div>
 <div class="cell" style="left:240px;top:163px;width:48px;height:20px;padding-left:3px">多种</div>
 <div class="cell rn" style="left:0px;top:183px;width:21px;height:19px">5</div>
 <div class="cell" style="left:21px;top:183px;width:104px;height:19px"><i class="tl" style="left:15px;width:16px"></i><span style="position:absolute;left:37px">一层采暖...</span></div>
 <div class="cell c" style="left:125px;top:183px;width:48px;height:19px">1:1</div>
 <div class="cell c" style="left:173px;top:183px;width:67px;height:19px">首层</div>
 <div class="cell" style="left:240px;top:183px;width:48px;height:19px;padding-left:3px">1.1</div>
 <div class="cell rn" style="left:0px;top:202px;width:21px;height:20px">6</div>
 <div class="cell" style="left:21px;top:202px;width:104px;height:20px"><i class="tl" style="left:15px;width:16px"></i><span style="position:absolute;left:37px">地下一层...</span></div>
 <div class="cell c" style="left:125px;top:202px;width:48px;height:20px">1:1</div>
 <div class="cell c" style="left:173px;top:202px;width:67px;height:20px">第-1层</div>
 <div class="cell" style="left:240px;top:202px;width:48px;height:20px;padding-left:3px">-1.1</div>
 <div class="cell rn" style="left:0px;top:222px;width:21px;height:20px">7</div>
 <div class="cell" style="left:21px;top:222px;width:104px;height:20px;background:#088a08;color:#045a04;border-color:#7fd07f"><i class="tl2"></i><span style="position:absolute;left:37px">地下二层...</span></div>
 <div class="cell c" style="left:125px;top:222px;width:48px;height:20px;background:#088a08;color:#045a04;border-color:#7fd07f">1:1</div>
 <div class="cell c" style="left:173px;top:222px;width:67px;height:20px;background:#088a08;color:#045a04;border-color:#7fd07f">第-2层</div>
 <div class="cell" style="left:240px;top:222px;width:48px;height:20px;padding-left:3px;background:#088a08;color:#045a04;border-color:#7fd07f">-2.1</div>
</div>
<div class="a" id="prop">
 <div class="phead" style="top:1px"></div>
 <svg class="a" style="left:286px;top:4px" width="7" height="6" viewBox="0 0 7 6"><path d="M.5.5l6 5M6.500.5l-6 5" stroke="#777" stroke-width="1.100"/></svg>
 <div class="ptitle" style="top:12px;height:20px"><span style="position:absolute;left:6px">属性</span></div>
 <div class="cell" style="left:0px;top:32px;width:20px;height:20px"></div>
 <div class="cell hd" style="left:20px;top:32px;width:107px;height:20px">属性名称</div>
 <div class="cell hd" style="left:127px;top:32px;width:117px;height:20px;background:#69a8ee;color:#fff;border-color:#69a8ee">属性值</div>
 <div class="cell hd" style="left:244px;top:32px;width:37px;height:20px;color:#333">附加</div>
 <div class="cell rn" style="left:0;top:52px;width:20px;height:20px;background:#f4f4f5">5</div>
 <div class="cell" style="left:20px;top:52px;width:107px;height:20px;padding-left:3px;color:#2f62d0">管径规格(mm)</div>
 <div class="cell" style="left:127px;top:52px;width:117px;height:20px;padding-left:4px">DN100</div>
 <div class="cell" style="left:244px;top:52px;width:37px;height:20px"><b class="ck" style="background:#3f86e8;border-color:#3f86e8"><svg style="position:absolute;left:1px;top:1px" width="10" height="10" viewBox="0 0 10 10"><path d="M1.500 5l2.500 2.500 4.500-5.500" fill="none" stroke="#fff" stroke-width="1.500"/></svg></b></div>
 <div class="cell rn" style="left:0;top:72px;width:20px;height:19px;background:#f4f4f5">6</div>
 <div class="cell" style="left:20px;top:72px;width:107px;height:19px;padding-left:3px;color:#2f62d0">外径(mm)</div>
 <div class="cell" style="left:127px;top:72px;width:117px;height:19px;padding-left:4px">(114)</div>
 <div class="cell" style="left:244px;top:72px;width:37px;height:19px"><b class="ck"></b></div>
 <div class="cell rn" style="left:0;top:91px;width:20px;height:20px;background:#f4f4f5">7</div>
 <div class="cell" style="left:20px;top:91px;width:107px;height:20px;padding-left:3px;color:#2f62d0">内径(mm)</div>
 <div class="cell" style="left:127px;top:91px;width:117px;height:20px;padding-left:4px">(106)</div>
 <div class="cell" style="left:244px;top:91px;width:37px;height:20px"><b class="ck"></b></div>
 <div class="cell rn" style="left:0;top:111px;width:20px;height:20px;background:#f4f4f5">8</div>
 <div class="cell" style="left:20px;top:111px;width:107px;height:20px;padding-left:3px">起点标高(m)</div>
 <div class="cell" style="left:127px;top:111px;width:117px;height:20px;padding-left:4px">层顶标高</div>
 <div class="cell" style="left:244px;top:111px;width:37px;height:20px"><b class="ck"></b></div>
 <div class="cell rn" style="left:0;top:131px;width:20px;height:19px;background:#f4f4f5">9</div>
 <div class="cell" style="left:20px;top:131px;width:107px;height:19px;padding-left:3px">终点标高(m)</div>
 <div class="cell" style="left:127px;top:131px;width:117px;height:19px;padding-left:4px">层顶标高</div>
 <div class="cell" style="left:244px;top:131px;width:37px;height:19px"><b class="ck"></b></div>
 <div class="cell rn" style="left:0;top:150px;width:20px;height:20px;background:#f4f4f5">10</div>
 <div class="cell" style="left:20px;top:150px;width:107px;height:20px;padding-left:3px">管件材质</div>
 <div class="cell" style="left:127px;top:150px;width:117px;height:20px;padding-left:4px">(钢制)</div>
 <div class="cell" style="left:244px;top:150px;width:37px;height:20px"><b class="ck"></b></div>
 <div class="a" style="left:287px;top:58px;width:6px;height:12px;border-radius:3px;background:#c4c6c9"></div>
 <div class="a" style="left:0;top:165px;width:298px;height:20px;background:#e9eaec"></div>
</div>
<div class="a" style="left:463px;top:180px;width:4px;height:464px;background:#f6f6f7"></div>
<div class="a" style="left:462px;top:365px;width:5px;height:94px;background:#5e5f61"></div>
<div class="a" id="cad">
<svg class="a" style="left:0;top:.5px" width="806" height="464" viewBox="467 180 806 464" fill="none">
<defs><pattern id="h" width="10" height="10" patternUnits="userSpaceOnUse"><path d="M-1 11L11 -1M-1 1L1 -1M9 11L11 9" stroke="#787878" stroke-width="1.150"/><circle cx="3" cy="3" r=".6" fill="#888"/></pattern><radialGradient id="tg" cx=".5" cy=".35" r=".7"><stop offset="0" stop-color="#4f9cf2"/><stop offset="1" stop-color="#2c78dc"/></radialGradient></defs>
<path d="M538 180L538 188" stroke="#1f8f2f" stroke-width="1.2"/>
<path d="M656.5 180L656.5 188" stroke="#1f8f2f" stroke-width="1.2"/>
<path d="M836 180L836 188" stroke="#1f8f2f" stroke-width="1.2"/>
<path d="M1028 180L1028 188" stroke="#1f8f2f" stroke-width="1.2"/>
<rect x="467" y="398" width="194" height="15" fill="url(#h)"/>
<rect x="647" y="413" width="14" height="41" fill="url(#h)"/>
<rect x="651" y="454" width="10" height="36" fill="url(#h)"/>
<rect x="661" y="443" width="181" height="12.5" fill="url(#h)"/>
<rect x="829" y="454" width="13" height="191" fill="url(#h)"/>
<rect x="842" y="484" width="343" height="13" fill="url(#h)"/>
<rect x="1020" y="497" width="14.5" height="148" fill="url(#h)"/>
<rect x="1169" y="497" width="16" height="148" fill="url(#h)"/>
<rect x="566" y="617" width="96" height="11.5" fill="url(#h)"/>
<rect x="650" y="594" width="12" height="23" fill="url(#h)"/>
<path d="M467 398.5L661 398.5" stroke="#b4b4b4" stroke-width="1"/>
<path d="M467 413L647 413" stroke="#b4b4b4" stroke-width="1"/>
<path d="M661 398L661 443" stroke="#b4b4b4" stroke-width="1"/>
<path d="M647 413L647 454" stroke="#b4b4b4" stroke-width="1"/>
<path d="M647 454H651V490H661" stroke="#b4b4b4" stroke-width="1" fill="none"/>
<path d="M662 454L662 617" stroke="#b4b4b4" stroke-width="1"/>
<path d="M650 490L650 628" stroke="#b4b4b4" stroke-width="1"/>
<path d="M661 443L842 443" stroke="#b4b4b4" stroke-width="1"/>
<path d="M662 455.5L829 455.5" stroke="#b4b4b4" stroke-width="1"/>
<path d="M842 443L842 484" stroke="#b4b4b4" stroke-width="1"/>
<path d="M829 454L829 645" stroke="#b4b4b4" stroke-width="1"/>
<path d="M842 497L842 645" stroke="#b4b4b4" stroke-width="1"/>
<path d="M842 484L1185 484" stroke="#b4b4b4" stroke-width="1"/>
<path d="M843 497L1020 497" stroke="#b4b4b4" stroke-width="1"/>
<path d="M1034.5 497L1169 497" stroke="#b4b4b4" stroke-width="1"/>
<path d="M1020 497L1020 645" stroke="#b4b4b4" stroke-width="1"/>
<path d="M1022 497L1022 645" stroke="#707070" stroke-width="1"/>
<path d="M1034.5 497L1034.5 645" stroke="#b4b4b4" stroke-width="1"/>
<path d="M1169 497L1169 645" stroke="#b4b4b4" stroke-width="1"/>
<path d="M1185 484L1185 645" stroke="#b4b4b4" stroke-width="1"/>
<path d="M650 594L662 594" stroke="#b4b4b4" stroke-width="1"/>
<path d="M498 617.5L829 617.5" stroke="#b4b4b4" stroke-width="1"/>
<path d="M498 628.5L694 628.5" stroke="#b4b4b4" stroke-width="1"/>
<path d="M566 617L566 628" stroke="#b4b4b4" stroke-width="1"/>
<path d="M662 621L694 621" stroke="#9a9a9a" stroke-width="1"/>
<path d="M800 628.5L829 628.5" stroke="#b4b4b4" stroke-width="1"/>
<path d="M736 618L736 628" stroke="#b4b4b4" stroke-width="1"/>
<path d="M756 618L756 628" stroke="#b4b4b4" stroke-width="1"/>
<path d="M736 628.5L756 628.5" stroke="#b4b4b4" stroke-width="1"/>
<path d="M474.5 393L474.5 424" stroke="#b4b4b4" stroke-width="1"/>
<path d="M549 393L549 420" stroke="#b4b4b4" stroke-width="1"/>
<path d="M648 393L648 430" stroke="#b4b4b4" stroke-width="1"/>
<path d="M472 401L477 395" stroke="#9a9a9a" stroke-width="1"/>
<path d="M546.5 401L551.5 395" stroke="#9a9a9a" stroke-width="1"/>
<path d="M645.5 401L650.5 395" stroke="#9a9a9a" stroke-width="1"/>
<path d="M613 401L619 395" stroke="#9a9a9a" stroke-width="1"/>
<text x="494" y="393.5" font-size="17" font-family="DejaVu Sans" font-weight="200" fill="#e8e8e8" text-anchor="start" textLength="24" lengthAdjust="spacingAndGlyphs" stroke="#e8e8e8" stroke-width=".35">1325</text>
<text x="567" y="393.5" font-size="17" font-family="DejaVu Sans" font-weight="200" fill="#e8e8e8" text-anchor="start" textLength="22" lengthAdjust="spacingAndGlyphs" stroke="#e8e8e8" stroke-width=".35">1200</text>
<text x="619.5" y="393.5" font-size="17" font-family="DejaVu Sans" font-weight="200" fill="#e8e8e8" text-anchor="start" textLength="17.5" lengthAdjust="spacingAndGlyphs" stroke="#e8e8e8" stroke-width=".35">550</text>
<path d="M497 414.500L560 416L631 418L640 428L646 440" stroke="#8a8a8a" stroke-width="1" fill="none"/>
<path d="M467 442.5L647 442.5" stroke="#b4b4b4" stroke-width="1"/>
<path d="M467 453.5L650 453.5" stroke="#b4b4b4" stroke-width="1"/>
<text x="537" y="439" font-size="19" font-family="Noto Serif CJK SC" font-weight="normal" fill="#8c8c8c" text-anchor="start" textLength="12" lengthAdjust="spacingAndGlyphs">风</text>
<path d="M616.5 344.5L760 344.5" stroke="#d020cc" stroke-width="1.3"/>
<path d="M616.5 344.5L616.5 443" stroke="#c41cc4" stroke-width="1.3"/>
<text x="645" y="342.5" font-size="18" font-family="Noto Serif CJK SC" font-weight="bold" fill="#e024dc" text-anchor="start" textLength="37" lengthAdjust="spacingAndGlyphs">洞顶标高为</text>
<text x="683" y="343" font-size="26" font-family="DejaVu Sans" font-weight="200" fill="#e024dc" text-anchor="start" textLength="51" lengthAdjust="spacingAndGlyphs" stroke="#e024dc" stroke-width=".35">-3.875</text>
<text x="645" y="367.5" font-size="16.5" font-family="Noto Serif CJK SC" font-weight="bold" fill="#e024dc" text-anchor="start" textLength="12.5" lengthAdjust="spacingAndGlyphs">预留</text>
<text x="658" y="368" font-size="26" font-family="DejaVu Sans" font-weight="200" fill="#e024dc" text-anchor="start" textLength="63" lengthAdjust="spacingAndGlyphs" stroke="#e024dc" stroke-width=".35">700X700</text>
<text x="723" y="367.5" font-size="16.5" font-family="Noto Serif CJK SC" font-weight="bold" fill="#e024dc" text-anchor="start" textLength="13" lengthAdjust="spacingAndGlyphs">洞口</text>
<path d="M747 272.3L907 272.3" stroke="#e024dc" stroke-width="1.3"/>
<path d="M907 272.3L907 329" stroke="#e024dc" stroke-width="1.3"/>
<text x="791.5" y="269.5" font-size="16.5" font-family="Noto Serif CJK SC" font-weight="bold" fill="#e024dc" text-anchor="start" textLength="64.5" lengthAdjust="spacingAndGlyphs">接车库采暖干管管线</text>
<path d="M901 331.500q3 -3 6 0t6 0t6 0t5.500 -1" stroke="#d0d0d0" stroke-width="1.1" fill="none"/>
<path d="M907 334L907 358" stroke="#28c8c8" stroke-width="1.3" stroke-dasharray="9 3"/>
<path d="M918 333L918 382" stroke="#b01818" stroke-width="1.3"/>
<text x="915" y="391" font-size="18" font-family="Liberation Serif" font-weight="bold" fill="#f0f0f0" text-anchor="start" textLength="18.5" lengthAdjust="spacingAndGlyphs" transform="rotate(-90 915 391)">DN1</text>
<path d="M907.5 395L907.5 502" stroke="#8a22a8" stroke-width="1.2" stroke-dasharray="26 3"/>
<rect x="915" y="396" width="8.5" height="249" fill="#da22d0"/>
<rect x="917.5" y="420" width="2.5" height="225" fill="#ee58e6"/>
<text x="928" y="419" font-size="15" font-family="Liberation Serif" font-weight="bold" fill="#f4a8ee" text-anchor="start" textLength="21" lengthAdjust="spacingAndGlyphs" transform="rotate(-90 928 419)">DN1</text>
<text x="901.5" y="482" font-size="12" font-family="Liberation Serif" font-weight="bold" fill="#e0e0e0" text-anchor="start" textLength="57" lengthAdjust="spacingAndGlyphs" transform="rotate(-90 901.5 482)">DN100 -1.80</text>
<text x="935" y="497" font-size="12" font-family="Liberation Serif" font-weight="bold" fill="#e0e0e0" text-anchor="start" textLength="56" lengthAdjust="spacingAndGlyphs" transform="rotate(-90 935 497)">DN100 -1.80</text>
<circle cx="906" cy="502.500" r="3" fill="none" stroke="#d01818" stroke-width="1.200"/>
<rect x="916" y="481" width="5.5" height="5.5" fill="#ff7a90"/>
<rect x="916" y="500" width="5.5" height="5.5" fill="#ff7a90"/>
<path d="M910.500 531V645M927 531V645M910.500 531H927" stroke="#d81818" stroke-width="1" fill="none"/>
<path d="M913 588H925M916 585.500l-3 2.500 3 2.500M922 585.500l3 2.500-3 2.500" stroke="#e02020" stroke-width="1" fill="none"/>
<path d="M930 497L930 645" stroke="#b4b4b4" stroke-width="1"/>
<path d="M934.5 497L934.5 645" stroke="#b4b4b4" stroke-width="1"/>
<rect x="862" y="438" width="33" height="3.4" fill="#fff"/>
<rect x="876.5" y="423" width="3.4" height="33.5" fill="#fff"/>
<path d="M616.5 443L616.5 510" stroke="#2222ff" stroke-width="1.6"/>
<path d="M598.5 443L598.5 458" stroke="#a89cf0" stroke-width="1.2"/>
<path d="M636.5 443L636.5 458" stroke="#a89cf0" stroke-width="1.2"/>
<path d="M598.5 458L598.5 510" stroke="#2fd6c6" stroke-width="1.2"/>
<path d="M636.5 458L636.5 510" stroke="#2fd6c6" stroke-width="1.2"/>
<path d="M597 457.5L638 457.5" stroke="#e8b8d8" stroke-width="1.2"/>
<path d="M597 475.5L638 475.5" stroke="#d8d8d8" stroke-width="1.2"/>
<path d="M609 463L624 471M624 463L609 471" stroke="#e8e8e8" stroke-width="1.2" fill="none"/>
<path d="M637 467L640.5 467" stroke="#d0d0d0" stroke-width="1"/>
<circle cx="643" cy="467" r="2.300" fill="none" stroke="#d8d8d8" stroke-width="1.100"/>
<text x="589" y="500" font-size="18" font-family="Liberation Serif" font-weight="bold" fill="#2fd6c6" text-anchor="start" textLength="48" lengthAdjust="spacingAndGlyphs" transform="rotate(-90 589 500)">650X650</text>
<text x="679" y="499" font-size="18" font-family="Liberation Serif" font-weight="bold" fill="#2fd6c6" text-anchor="start" textLength="25" lengthAdjust="spacingAndGlyphs" transform="rotate(-90 679 499)">70°C</text>
<path d="M703.3 454L703.3 539" stroke="#d0d0d0" stroke-width="1"/>
<path d="M692 539L708 539" stroke="#d0d0d0" stroke-width="1"/>
<text x="698" y="512" font-size="15.5" font-family="DejaVu Sans" font-weight="200" fill="#e8e8e8" text-anchor="start" textLength="21.5" lengthAdjust="spacingAndGlyphs" transform="rotate(-90 698 512)" stroke="#e8e8e8" stroke-width=".35">1500</text>
<path d="M743.6 454L743.6 625" stroke="#b4b4b4" stroke-width="1"/>
<path d="M748.7 454L748.7 625" stroke="#b4b4b4" stroke-width="1"/>
<path d="M694 618A42 42 0 0 1 736 576V618" stroke="#c8c8c8" stroke-width="1" fill="none"/>
<path d="M756 618V576A46 44 0 0 1 802 618" stroke="#c8c8c8" stroke-width="1" fill="none"/>
<text x="672.5" y="572" font-size="20" font-family="Noto Serif CJK SC" font-weight="normal" fill="#8f8f8f" text-anchor="start" textLength="24.5" lengthAdjust="spacingAndGlyphs">储藏</text>
<text x="765" y="539" font-size="20" font-family="Noto Serif CJK SC" font-weight="normal" fill="#8f8f8f" text-anchor="start" textLength="24.5" lengthAdjust="spacingAndGlyphs">储藏</text>
<text x="962.5" y="588.5" font-size="20" font-family="Noto Serif CJK SC" font-weight="normal" fill="#8f8f8f" text-anchor="start" textLength="25" lengthAdjust="spacingAndGlyphs">储藏</text>
<text x="848" y="589" font-size="20" font-family="Noto Serif CJK SC" font-weight="normal" fill="#8f8f8f" text-anchor="start" textLength="50" lengthAdjust="spacingAndGlyphs">热力小室</text>
<text x="578.5" y="597" font-size="20" font-family="Noto Serif CJK SC" font-weight="normal" fill="#8f8f8f" text-anchor="start" textLength="36" lengthAdjust="spacingAndGlyphs">风机房</text>
<text x="674" y="613" font-size="17" font-family="DejaVu Sans" font-weight="200" fill="#e8e8e8" text-anchor="start" textLength="22" lengthAdjust="spacingAndGlyphs" stroke="#e8e8e8" stroke-width=".35">5000</text>
<path d="M467 510.700H503.500V567H467" stroke="#3fd0c4" stroke-width="1.2" fill="none"/>
<text x="466" y="546" font-size="17" font-family="Liberation Serif" font-weight="bold" fill="#2fd6c6" text-anchor="start" textLength="17" lengthAdjust="spacingAndGlyphs">YX3</text>
<path d="M467 550H498V633.500" stroke="#3fd0c4" stroke-width="1.2" fill="none"/>
<path d="M475 550L475 620" stroke="#2222ff" stroke-width="1.6"/>
<path d="M503.5 520L588 520" stroke="#9fe0d8" stroke-width="1.2"/>
<path d="M503.5 556.7L588 556.7" stroke="#9fe0d8" stroke-width="1.2"/>
<path d="M514 520L514 556.7" stroke="#3fd0c4" stroke-width="1.2"/>
<path d="M527 520L527 556.7" stroke="#3fd0c4" stroke-width="1.2"/>
<path d="M569.3 520L569.3 556.7" stroke="#3fd0c4" stroke-width="1.2"/>
<path d="M584 520L584 556.7" stroke="#3fd0c4" stroke-width="1.2"/>
<path d="M467 538.3L596 538.3" stroke="#1c1cc8" stroke-width="2.2"/>
<circle cx="547.500" cy="538.300" r="14.300" fill="none" stroke="#3fd0c4" stroke-width="1.200"/>
<path d="M539 538.300L548 529V534H556V542.500H548V547.500Z" stroke="#3fd0c4" stroke-width="1.2" fill="none"/>
<path d="M517.5 527L523.5 527" stroke="#48e0ff" stroke-width="1.6"/>
<path d="M517.5 538.3L523.5 538.3" stroke="#48e0ff" stroke-width="1.6"/>
<path d="M517.5 549.5L523.5 549.5" stroke="#48e0ff" stroke-width="1.6"/>
<path d="M573.5 527L579.5 527" stroke="#48e0ff" stroke-width="1.6"/>
<path d="M573.5 538.3L579.5 538.3" stroke="#48e0ff" stroke-width="1.6"/>
<path d="M573.5 549.5L579.5 549.5" stroke="#48e0ff" stroke-width="1.6"/>
<text x="531" y="517.5" font-size="16.5" font-family="Liberation Serif" font-weight="bold" fill="#2fd6c6" text-anchor="start" textLength="19" lengthAdjust="spacingAndGlyphs">SFJ</text>
<path d="M588 510.300H646V567H588Z" stroke="#3fd0c4" stroke-width="1.2" fill="none"/>
<text x="595.5" y="546.3" font-size="17" font-family="Liberation Serif" font-weight="bold" fill="#2fd6c6" text-anchor="start" textLength="25" lengthAdjust="spacingAndGlyphs">JYX1</text>
<text x="530" y="577" font-size="16.5" font-family="Liberation Serif" font-weight="bold" fill="#2fd6c6" text-anchor="start" textLength="24" lengthAdjust="spacingAndGlyphs">ø650</text>
<text x="528.5" y="612" font-size="17" font-family="Liberation Serif" font-weight="bold" fill="#2fd6c6" text-anchor="start" textLength="24.5" lengthAdjust="spacingAndGlyphs">70°C</text>
<text x="525" y="646.5" font-size="19" font-family="Liberation Serif" font-weight="bold" fill="#2fd6c6" text-anchor="start" textLength="56.5" lengthAdjust="spacingAndGlyphs" transform="rotate(-90 525 646.5)">800X1200</text>
<path d="M467 594L503.5 594" stroke="#d0d0d0" stroke-width="1"/>
<path d="M467 611.7L503.5 611.7" stroke="#d0d0d0" stroke-width="1"/>
<path d="M467 618L497 618" stroke="#a030a8" stroke-width="1.6"/>
<path d="M467 628L498 628" stroke="#d0d0d0" stroke-width="1"/>
<path d="M467 633.7L503.5 633.7" stroke="#d0d0d0" stroke-width="1"/>
<path d="M467 633L472 628.500L478 633L484 628.500L490 633L496 628.500" stroke="#c8c8c8" stroke-width="1" fill="none"/>
<path d="M468 599.500L482 607.500M482 599.500L468 607.500" stroke="#e8e8e8" stroke-width="1.2" fill="none"/>
<path d="M498 603.5L503 603.5" stroke="#d0d0d0" stroke-width="1"/>
<circle cx="505.500" cy="603.500" r="2.300" fill="none" stroke="#d8d8d8" stroke-width="1.100"/>
<path d="M467 621.500L480 623" stroke="#c030c0" stroke-width="1.3" fill="none"/>
<path d="M549.6 613L549.6 645" stroke="#d0d0d0" stroke-width="1"/>
<path d="M541 637l8.500 8M558 637l-8.500 8" stroke="#48c8c0" stroke-width="1" fill="none"/>
<path d="M490 636L490 645" stroke="#c0c0c0" stroke-width="1"/>
<path d="M513.6 596L513.6 578" stroke="#22e022" stroke-width="3"/>
<path d="M509.300 580L513.600 569.500L518 580Z" stroke="#22e022" stroke-width="0" fill="#22e022"/>
<text x="511" y="567" font-size="9" font-family="Liberation Sans" font-weight="bold" fill="#22d822" text-anchor="start" textLength="5" lengthAdjust="spacingAndGlyphs">Y</text>
<path d="M518 596.5L531 596.5" stroke="#f01818" stroke-width="3"/>
<path d="M530 592.800L541.500 596.500L530 600.200Z" stroke="#f01818" stroke-width="0" fill="#f01818"/>
<text x="545" y="600" font-size="10" font-family="Liberation Sans" font-weight="bold" fill="#e81818" text-anchor="start" textLength="5.5" lengthAdjust="spacingAndGlyphs">X</text>
<circle cx="513.600" cy="596.500" r="5.500" fill="#1c1cd8"/>
<path d="M1104 640.500L1130 625.500M1141 619L1169 603" stroke="#b8b8b8" stroke-width="1" fill="none"/>
<path d="M1152 613.700H1169M1131 627.800H1169M1104 640.500H1169M1137 628V645M1104 640.500V645" stroke="#b8b8b8" stroke-width="1" fill="none"/>
<path d="M1130 618L1134.500 622L1132 624L1141 626.500L1138 619L1136 621Z" stroke="#c8c8c8" stroke-width="1" fill="none"/>
<text x="1199" y="637.5" font-size="19" font-family="DejaVu Sans" font-weight="200" fill="#c8c8c8" text-anchor="start" textLength="40" lengthAdjust="spacingAndGlyphs" stroke="#c8c8c8" stroke-width=".35">-6.400</text>
<path d="M1199 642.5L1273 642.5" stroke="#b0b0b0" stroke-width="1"/>
<path d="M940 642.500l5 -2l10 2.500" stroke="#a0a0a0" stroke-width="1" fill="none"/>
<circle cx="1173.400" cy="518.400" r="22" fill="url(#tg)" stroke="#e4eeff" stroke-width="2.600"/>
<text x="1173.4" y="523.5" font-size="14" font-family="Liberation Sans" font-weight="normal" fill="#cfe6ff" text-anchor="middle" textLength="33" lengthAdjust="spacingAndGlyphs">00:00</text>
</svg>
</div>
<div class="a" id="status">
 <span class="s" style="left:3px">= 27220.11 Y = 10760.92</span>
 <span class="s" style="left:145px">层高：3.15</span>
 <span class="s" style="left:223px">底标高：-6.3</span>
 <span class="s" style="left:320px">0</span>
 <span class="s" style="left:417px">隐藏：0</span>
 <div class="sb on" style="left:513px;width:24px"><svg style="position:absolute;left:4px;top:4px" width="14" height="14" viewBox="0 0 14 14"><path d="M2 1v11h10" fill="none" stroke="#5b7fb8" stroke-width="1.300"/><path d="M5 8v4" stroke="#8aa4d0" stroke-width="1"/></svg></div>
 <div class="sb on" style="left:541px;width:33px"><svg style="position:absolute;left:3px;top:3px" width="16" height="16" viewBox="0 0 16 16"><rect x="2.500" y="2.500" width="11" height="11" fill="#fff" stroke="#5b7fb8" stroke-width="1.200"/><rect x="1" y="1" width="4" height="4" fill="#f0883a"/></svg><i class="dn" style="left:22px;top:9px"></i></div>
 <div class="sb" style="left:577px;width:33px"><svg style="position:absolute;left:3px;top:3px" width="17" height="17" viewBox="0 0 17 17"><path d="M2 5l6-3 7 3v7l-6 4-7-4z M2 5l7 3 6-3M9 8v8" fill="none" stroke="#555" stroke-width="1.200"/></svg><i class="dn" style="left:23px;top:9px"></i></div>
 <div class="sb" style="left:614px;width:22px"><svg style="position:absolute;left:3px;top:4px" width="14" height="14" viewBox="0 0 14 14"><path d="M1 1l12 12M13 1L1 13" stroke="#b4b6ba" stroke-width="1.200"/></svg></div>
 <div class="sb" style="left:640px;width:33px"><svg style="position:absolute;left:3px;top:4px" width="16" height="15" viewBox="0 0 16 15"><path d="M14 1L2 12h13" fill="none" stroke="#444" stroke-width="1.300"/><path d="M7 7.500a6 6 0 0 1 2 4.500" fill="none" stroke="#444"/></svg><i class="dn" style="left:23px;top:9px"></i></div>
 <div class="sb" style="left:677px;width:33px"><svg style="position:absolute;left:3px;top:4px" width="17" height="15" viewBox="0 0 17 15"><path d="M4 1v7M.5 4.500h7" stroke="#444" stroke-width="1.200"/><rect x="6" y="10" width="9" height="3.500" fill="#444"/></svg><i class="dn" style="left:23px;top:9px"></i></div>
 <div class="sb" style="left:714px;width:68px;color:#8a8c90;line-height:22px;text-align:center">跨类型选择</div>
 <div class="sb" style="left:785px;width:58px;color:#66686c;line-height:22px;text-align:center">折线选择</div>
 <span class="s" style="left:849px">CAD图亮度：100%</span>
 <div class="sb" style="left:954px;width:24px;background:#d0d1d3"><b style="position:absolute;left:5px;top:4px;width:13px;height:13px;border-radius:50%;background:#fff;border:1px solid #999"></b><b style="position:absolute;left:9px;top:10px;width:5px;height:1.500px;background:#444"></b></div>
 <div class="a" style="left:978px;top:13px;width:34px;height:1px;background:#c4c6c9"></div>
 <div class="a" style="left:1011px;top:4px;width:10px;height:19px;border:1px solid #777;border-radius:2px;background:#fff"></div>
 <div class="sb" style="left:1021px;width:23px;background:#d0d1d3"><b style="position:absolute;left:4px;top:4px;width:13px;height:13px;border-radius:50%;background:#fff;border:1px solid #999"></b><b style="position:absolute;left:8px;top:10px;width:5px;height:1.500px;background:#444"></b><b style="position:absolute;left:10px;top:8px;width:1.500px;height:5px;background:#444"></b></div>
 <span class="s" style="left:1045px">按鼠标左键指定第一个角点，<span style="font-size:8px">▪</span></span>
</div>
<div class="a" style="left:0;top:671px;width:1273px;height:3px;background:linear-gradient(#f4f6f8 0,#f4f6f8 27%,#5f80ad 27%)"></div>
<div class="a" style="left:178px;top:671.800px;width:260px;height:2.200px;background:linear-gradient(#1c1c1c 0,#1c1c1c 45%,#f0f0f0 45%)"></div>
<div class="a" style="left:0;top:671.800px;width:178px;height:2.200px;background:#4068ae"></div>
<div class="a" id="vtb">
 <svg width="30" height="212" viewBox="0 0 30 212" fill="none">
  <ellipse cx="14" cy="21" rx="12" ry="5" transform="rotate(-30 14 21)" stroke="#5a5f66" stroke-width="1.200"/>
  <circle cx="13" cy="20" r="8" fill="#d8dadd" stroke="#5a5f66"/><circle cx="22" cy="14" r="4" fill="#e8eaec" stroke="#6a6f76"/>
  <path d="M4 42h15v15H4zM4 42l5-5h15l-5 5M24 37v15l-5 5" fill="#9ea2a8" stroke="#4f5a6a" stroke-width="1.200"/>
  <text x="11" y="55" font-size="7" font-family="Liberation Sans" fill="#333">3D</text>
  <path d="M4 68h15v15H4z" fill="#e6efff" stroke="#3f5a8a" stroke-width="1.300"/><path d="M4 68l5-5h15l-5 5M24 63v15l-5 5" fill="#f4f8ff" stroke="#3f5a8a" stroke-width="1.200"/>
  <path d="M11.500 93l3 3 3-3z" fill="#444"/>
  <path d="M4 105h15v15H4z" fill="#8c97a6" stroke="#46566c" stroke-width="1.200"/><path d="M4 105l5-5h15l-5 5M24 100v15l-5 5" fill="#a8b0bc" stroke="#46566c" stroke-width="1.200"/>
  <path d="M11.500 130l3 3 3-3z" fill="#444"/>
  <path d="M22 144a9 9 0 1 0 2 10" stroke="#4a4f56" stroke-width="1.800"/><path d="M19 141l5 2-1 5" stroke="#4a4f56" stroke-width="1.500"/>
  <path d="M11.500 166l3 3 3-3z" fill="#444"/>
  <path d="M3 175.500h24" stroke="#c4c6c9"/>
  <rect x="4" y="182" width="21" height="19" fill="#b4bac4" stroke="#4a5568" stroke-width="1.200"/><rect x="4" y="182" width="21" height="4" fill="#7a8498"/>
  <path d="M8 190h4M8 194h4M8 198h4M17 190h4M17 194h4M17 198h4M14.500 186v15" stroke="#3f4a60" stroke-width="1.300"/>
 </svg>
</div>
<svg class="a" style="left:1273px;top:0" width="7" height="674" viewBox="0 0 7 674">
 <rect width="7" height="674" fill="#000"/>
 <path d="M1 145l3 5 1 20-4-5zM1 183l3 5-1 14-2-4zM4 196l3 4v22l-2-7zM1 228l4 8 2 14v12l-5-6zM1 262h6v128h-6zM1 396l6 4v19l-5-4zM2 446l5 4v50l-4 3-2-23z" fill="#ececec"/>
 <path d="M1 270l3 4-1 9-2-3zM4 292l3 3v12l-3-5zM1 312l4 5-2 9-2-4zM4 338l3 2v13l-3-6zM1 360l3 5-1 10-2-4zM5 380l2 2v8h-2zM4 458l2 3-1 6zM2 474l2 3-1 7zM5 486l2 2v7z" fill="#000"/>
</svg>
</body>
</html>
